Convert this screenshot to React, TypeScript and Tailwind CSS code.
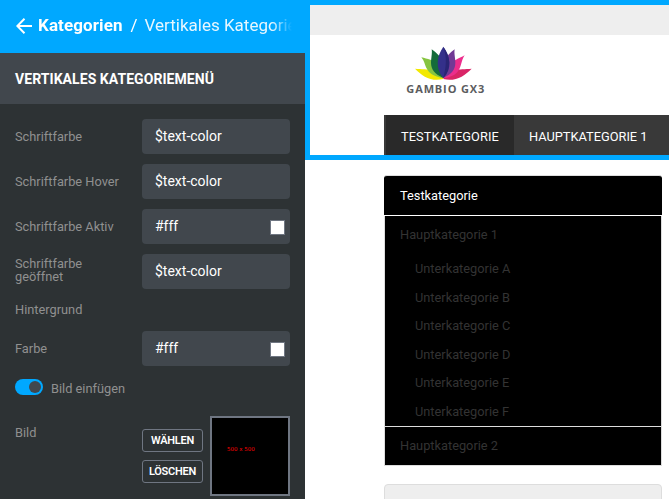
import React from "react";

function Field({ label, value, swatch = false, twoLines = false }: { label: string; value: string; swatch?: boolean; twoLines?: boolean }) {
  return (
    <div className="flex h-[35px] items-center">
      <label className={`${twoLines ? "mb-[3px]" : "mb-px"} w-[127px] shrink-0 pr-4 text-[12.8px] leading-[13px] text-[#909090]`}>
        {label}
      </label>
      <div className="flex h-[35px] w-[148px] items-center justify-between rounded bg-[#41474d] pl-[13px] pr-[5px] text-sm text-white">
        <span className="mb-[2px]">{value}</span>
        {swatch && <span className="mt-[2px] h-[15px] w-[15px] border border-[#6f7682] bg-white" />}
      </div>
    </div>
  );
}

function SmallButton({ children }: { children: React.ReactNode }) {
  return (
    <button className="flex h-[23px] w-[61px] items-center justify-center whitespace-nowrap rounded-[3px] border border-[#6f7682] pt-px text-[11px] font-semibold tracking-[-0.25px] text-white">
      {children}
    </button>
  );
}

function Lotus() {
  return (
    <svg className="block h-[60px] w-[90px]" viewBox="0 0 270 180">
      <path d="M130 117C120 82 84 90 45 86C67 109 94 126 130 117Z" fill="#f2e900" />
      <path d="M130 115C138 70 101 61 64 52C82 74 70 104 130 115Z" fill="#86c440" />
      <path d="M130 114C148 74 122 48 95 28C100 54 74 90 130 114Z" fill="#146b3a" />
      <path d="M130 117C143 82 176 90 215 86C193 109 164 126 130 117Z" fill="#d92567" />
      <path d="M130 115C125 76 158 65 194 46C177 70 191 107 130 115Z" fill="#ec2d8c" />
      <path d="M130 114C114 74 138 48 164 28C159 54 186 90 130 114Z" fill="#713995" />
      <path d="M130 114C105 86 110 48 130 20C151 48 157 86 130 114Z" fill="#34308a" />
      <path d="M130 114C138 80 142 55 130 20C151 48 157 86 130 114Z" fill="#292574" />
      <text x="19" y="158" textLength="234" fontFamily="Open Sans, sans-serif" fontWeight="700" fontSize="33" fill="#5b5c5e">
        GAMBIO GX3
      </text>
    </svg>
  );
}

function Sidebar() {
  return (
    <aside className="h-[499px] w-[305px] shrink-0 bg-[#2d3234]">
      <header className="flex h-[53px] items-center bg-[#00a8ff] pl-4 pr-[13px] text-[17px] text-white">
        <svg className="mr-[6px] mb-px h-4 w-4 shrink-0" viewBox="0 0 16 16" fill="none" stroke="white" strokeWidth="2">
          <path d="M8.5 .8 1.3 8l7.2 7.2M1.5 8H16" />
        </svg>
        <div className="min-w-0 flex-1 overflow-hidden whitespace-nowrap pb-[2px] [mask-image:linear-gradient(to_right,black_92%,transparent)]">
          <b className="tracking-[0.1px]">Kategorien</b>
          <span className="ml-[6px] mr-[7px] pl-[2px]">/</span>
          <span className="text-white/90">Vertikales Kategorie</span>
        </div>
      </header>
      <h1 className="flex h-[51px] items-center bg-[#41474d] px-[15px] text-sm font-bold tracking-[0.06px] text-white">VERTIKALES KATEGORIEMENÜ</h1>
      <div className="px-[15px] pt-[15px]">
        <div className="flex flex-col gap-[10px]">
          <Field label="Schriftfarbe" value="$text-color" />
          <Field label="Schriftfarbe Hover" value="$text-color" />
          <Field label="Schriftfarbe Aktiv" value="#fff" swatch />
          <Field label="Schriftfarbe geöffnet" value="$text-color" twoLines />
        </div>
        <div className="flex h-[42px] items-center text-[12.8px] text-[#909090]">Hintergrund</div>
        <Field label="Farbe" value="#fff" swatch />
        <div className="mt-[13px] flex h-4 items-center">
          <span className="flex h-4 w-7 items-center justify-end rounded-full bg-[#00a8ff] pr-[2px]">
            <span className="h-3 w-3 rounded-full bg-[#41474d]" />
          </span>
          <span className="ml-2 mt-[3px] text-[12.8px] text-[#909090]">Bild einfügen</span>
        </div>
        <div className="mt-[21px] flex">
          <span className="w-[127px] pt-[7px] text-[12.8px] text-[#909090]">Bild</span>
          <div className="flex w-[68px] flex-col gap-2 pt-[13px]">
            <SmallButton>WÄHLEN</SmallButton>
            <SmallButton>LÖSCHEN</SmallButton>
          </div>
          <div className="h-20 w-20 border-2 border-[#6f7682] bg-black pl-[15px] pt-[27px] font-['DejaVu_Sans'] text-[5.5px] leading-[9px] text-[#ff0000]">500 x 500</div>
        </div>
      </div>
    </aside>
  );
}

const subcategories = ["A", "B", "C", "D", "E", "F"];

export default function App() {
  return (
    <div className="flex h-[499px] w-[669px] overflow-hidden bg-white font-[Roboto,sans-serif]">
      <Sidebar />
      <main className="w-[364px]">
        <section className="h-40 border-y-[5px] border-l-[5px] border-[#00a8ff] bg-white">
          <div className="h-[30px] bg-[#eee]" />
          <div className="h-20 pl-[90px] pt-[5px]">
            <Lotus />
          </div>
          <nav className="ml-[74px] flex h-10 bg-[#393939] pl-[2px] text-[12.8px] text-white">
            <a className="flex w-32 items-center bg-[#292929] pl-[15px] pt-[3px] tracking-[0.08px]">TESTKATEGORIE</a>
            <a className="flex items-center pl-[15px] pt-[3px]">HAUPTKATEGORIE 1</a>
          </nav>
        </section>
        <div className="ml-[79px] mt-[15px] w-[278px] text-[12.8px] text-[#333]">
          <div className="h-[41px] rounded-t-[3px] border-b border-t border-b-white border-t-[#ddd] bg-black pl-4 leading-[39px] text-white">Testkategorie</div>
          <div className="h-[250px] border border-t-0 border-[#ddd] bg-black">
            <div className="h-[38px] pl-[15px] leading-[37px]">Hauptkategorie 1</div>
            <ul className="h-[172px]">
              {subcategories.map((name) => (
                <li key={name} className="h-[28.6px] pl-[30px] leading-[29px]">Unterkategorie {name}</li>
              ))}
            </ul>
            <div className="h-[39px] border-t border-[#ddd] pl-[15px] leading-[37px]">Hauptkategorie 2</div>
          </div>
        </div>
        <div className="ml-[79px] mt-[18px] h-5 w-[278px] rounded-t-sm border border-[#ddd] bg-[#eee]" />
      </main>
    </div>
  );
}
